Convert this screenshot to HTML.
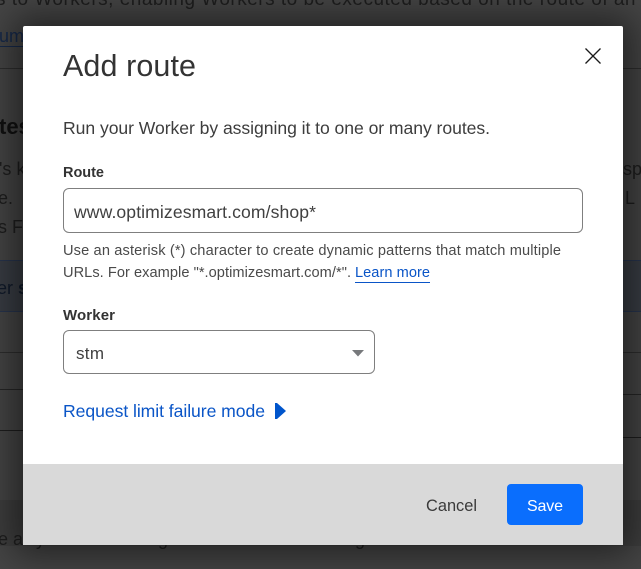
<!DOCTYPE html>
<html lang="en">
<head>
<meta charset="utf-8">
<title>Add route</title>
<style>
html,body{margin:0;padding:0;width:641px;height:569px;overflow:hidden;background:#454545}
body{position:relative;font-family:"Liberation Sans",sans-serif}
.band{position:absolute;left:0;width:641px}
.modal{position:absolute;left:23px;top:26px;width:600px;height:519px;background:#fff;border-radius:2px;box-shadow:0 0 36px 10px rgba(0,0,0,.5)}
.footer{position:absolute;left:23px;top:464px;width:600px;height:81px;background:#d9d9d9}
.btn{position:absolute;left:507px;top:484px;width:76px;height:41px;background:#0a6efd;border-radius:4px}
.box{position:absolute;box-sizing:border-box;background:#fff;border:1px solid #7f7f7f;border-radius:6px}
svg{position:absolute;left:0;top:0}
text{font-family:"Liberation Sans",sans-serif}
</style>
</head>
<body>
<div class="band" style="top:260px;height:52px;background:#393d44"></div>
<div class="band" style="top:500px;height:46px;background:#3e3e3e"></div>

<svg width="641" height="569" viewBox="0 0 641 569">
  <g fill="#1e1e1e">
    <text x="-4" y="5" font-size="19" textLength="650" lengthAdjust="spacing">s to Workers, enabling Workers to be executed based on the route of an i</text>
    <text x="-1" y="42" font-size="18" fill="#16294a">um</text>
    <text x="-1" y="134" font-size="22" font-weight="bold" fill="#111">tes</text>
    <text x="-1" y="175" font-size="18">'s k</text>
    <text x="-2" y="204" font-size="18">e.</text>
    <text x="-2" y="233" font-size="18">s F</text>
    <text x="623" y="175" font-size="18">sp</text>
    <text x="625" y="204" font-size="18">L</text>
    <text x="-3" y="294" font-size="18" fill="#101a2a">er <tspan font-weight="bold">s</tspan></text>
    <text x="-2" y="545" font-size="18">e a</text>
    <text x="36" y="545" font-size="18">y</text>
    <text x="158" y="545" font-size="18">g</text>
    <text x="355" y="545" font-size="18">g</text>
  </g>
  <g stroke-width="1" fill="none">
    <path d="M0 68.500H641" stroke="#2e2e2e"/>
    <path d="M0 46.500H23" stroke="#16294a"/>
    <path d="M0 260.500H641M0 311.500H641" stroke="#28354e"/>
    <path d="M0 352.500H23M623 352.500H641" stroke="#2e2e2e"/>
    <path d="M0 389.500H23M623 394.500H641" stroke="#262626"/>
    <path d="M0 430.500H23M623 437.500H641" stroke="#1e1e1e"/>
  </g>
</svg>

<div class="modal"></div>
<div class="footer"></div>
<div class="box" style="left:63px;top:188px;width:520px;height:45px"></div>
<div class="box" style="left:63px;top:330px;width:312px;height:44px"></div>
<div class="btn"></div>

<svg width="641" height="569" viewBox="0 0 641 569">
  <text x="63" y="76" font-size="30.500" fill="#333" textLength="133" lengthAdjust="spacing">Add route</text>
  <path d="M585.500 48.500L600.500 63.500M600.500 48.500L585.500 63.500" stroke="#1a1a1a" stroke-width="1.300" fill="none"/>
  <text x="63" y="134" font-size="17.600" fill="#3d3d3d" textLength="427" lengthAdjust="spacing">Run your Worker by assigning it to one or many routes.</text>
  <text x="63" y="177" font-size="14.500" font-weight="bold" fill="#333" textLength="41" lengthAdjust="spacing">Route</text>
  <text x="74" y="218" font-size="17.600" fill="#404040" textLength="242" lengthAdjust="spacing">www.optimizesmart.com/shop*</text>
  <text x="63" y="255" font-size="14.600" fill="#4a4a4a" textLength="498" lengthAdjust="spacing">Use an asterisk (*) character to create dynamic patterns that match multiple</text>
  <text x="63" y="277" font-size="14.600" fill="#4a4a4a" textLength="288" lengthAdjust="spacing">URLs. For example "*.optimizesmart.com/*".</text>
  <text x="355" y="277" font-size="14.600" fill="#0a55c7" textLength="75" lengthAdjust="spacing">Learn more</text>
  <path d="M355 282.500H430" stroke="#0a55c7" stroke-width="1" fill="none"/>
  <text x="63" y="320" font-size="15" font-weight="bold" fill="#333" textLength="52" lengthAdjust="spacing">Worker</text>
  <text x="76" y="359" font-size="17" fill="#404040" textLength="28" lengthAdjust="spacing">stm</text>
  <path d="M352 350H364L358 356.500Z" fill="#77797c"/>
  <text x="63" y="417" font-size="17.600" fill="#0a55c7" textLength="202" lengthAdjust="spacing">Request limit failure mode</text>
  <path d="M275 403H277L286 411L277 419H275Z" fill="#0055cc"/>
  <text x="426" y="511" font-size="16.400" fill="#3a3a3a" textLength="51" lengthAdjust="spacing">Cancel</text>
  <text x="527" y="511" font-size="16" fill="#fff" textLength="36" lengthAdjust="spacing">Save</text>
</svg>
</body>
</html>
